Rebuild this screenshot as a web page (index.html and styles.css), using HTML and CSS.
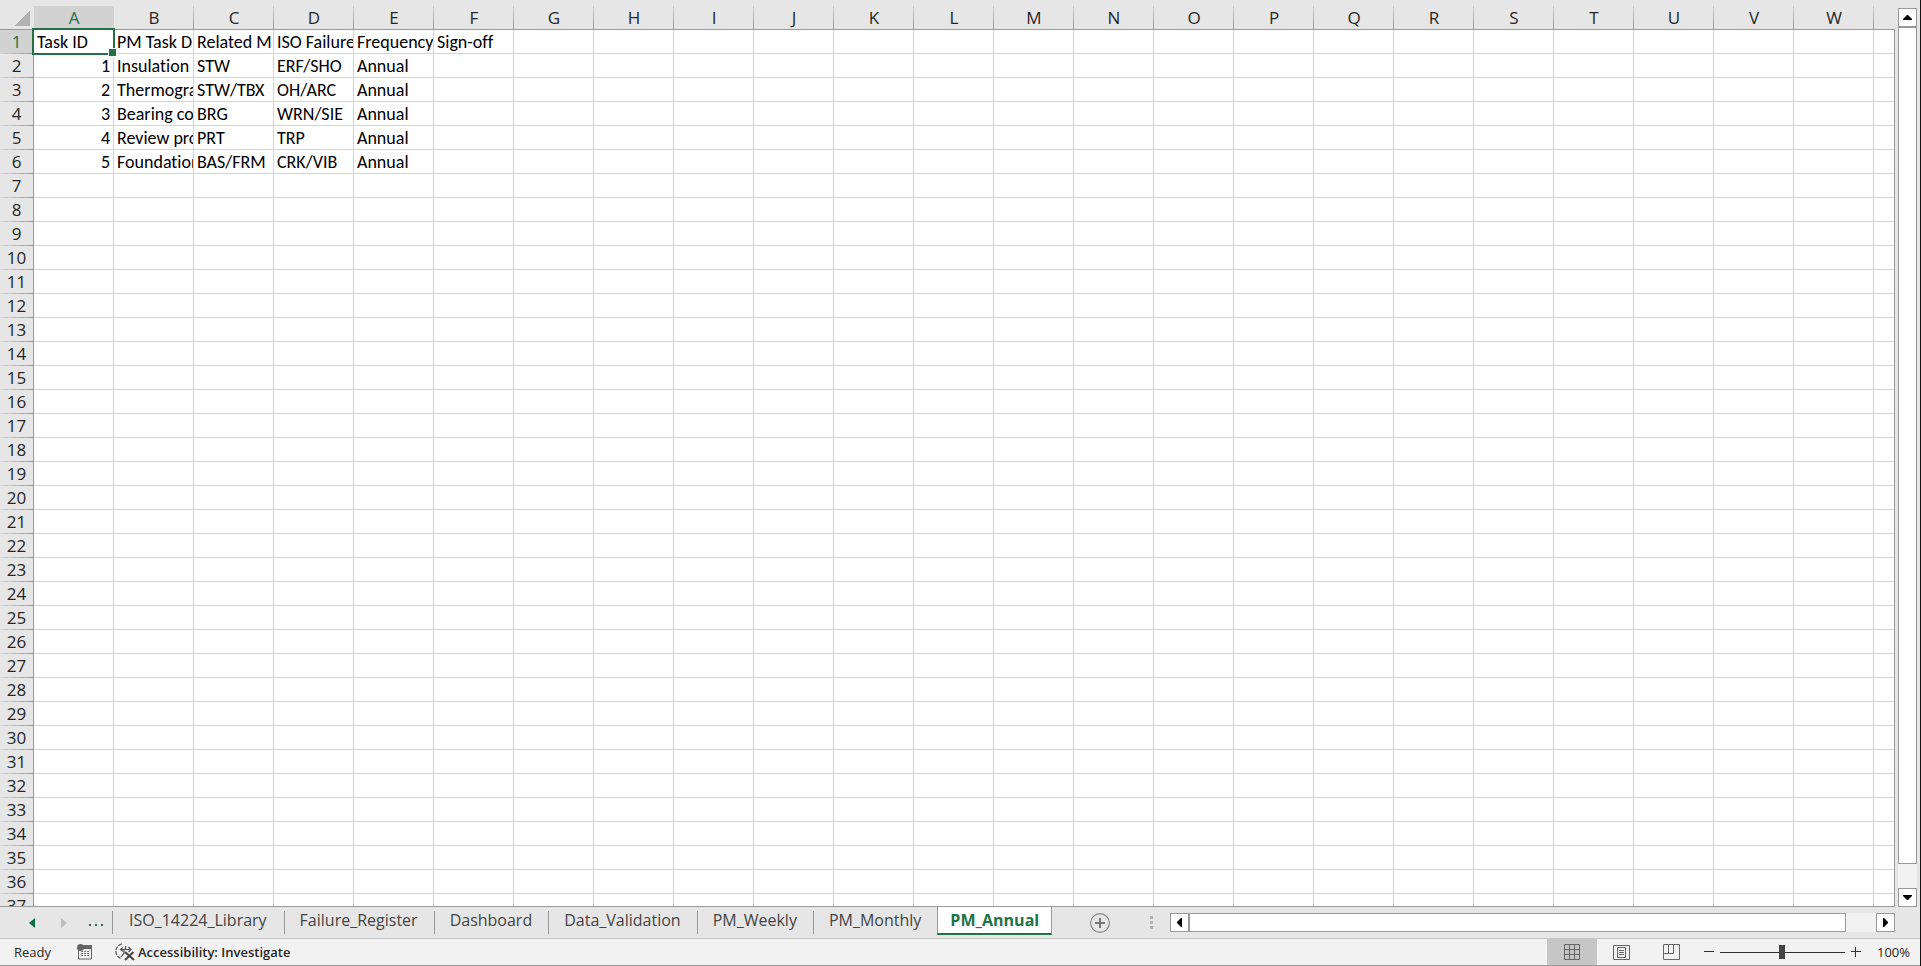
FILE: index.html
```html
<!DOCTYPE html>
<html lang="en">

<head>
    <meta charset="UTF-8">
    <meta name="viewport" content="width=device-width, initial-scale=1.0">
    <title>PM_Annual</title>
    <link rel="stylesheet" href="styles.css">
</head>

<body>
    <main class="workspace">
        <div class="sheet">
            <table class="grid">
                <thead>
                    <tr></tr>
                </thead>
                <tbody></tbody>
            </table>
        </div>
        <div class="vscroll">
            <button class="arrow" aria-label="Scroll up">
                <svg width="9" height="5" viewBox="0 0 9 5"><path d="M4 0h1l4 4v1H0V4z" /></svg>
            </button>
            <div class="thumb"></div>
            <div class="track"></div>
            <button class="arrow" aria-label="Scroll down">
                <svg width="9" height="5" viewBox="0 0 9 5"><path d="M0 0h9v1L5 5H4L0 1z" /></svg>
            </button>
        </div>
    </main>

    <div class="tabbar">
        <div class="tabnav">
            <button aria-label="Previous sheet"><svg width="6" height="10" viewBox="0 0 6 10"><path d="M6 0v10L0 5z" fill="#0e7040" /></svg></button>
            <button aria-label="Next sheet"><svg width="6" height="10" viewBox="0 0 6 10"><path d="M0 0v10l6-5z" fill="#bdbdbd" /></svg></button>
            <button class="more" aria-label="More sheets"><svg width="14" height="2" viewBox="0 0 14 2"><path d="M0 0h2v2H0zM6 0h2v2H6zM12 0h2v2h-2z" fill="#217346" /></svg></button>
        </div>
        <nav class="tabs">
            <a href="#">ISO_14224_Library</a>
            <a href="#">Failure_Register</a>
            <a href="#">Dashboard</a>
            <a href="#">Data_Validation</a>
            <a href="#">PM_Weekly</a>
            <a href="#">PM_Monthly</a>
            <a href="#" class="active">PM_Annual</a>
        </nav>
        <button class="add" aria-label="New sheet">
            <svg width="20" height="20" viewBox="0 0 20 20"><circle cx="10" cy="10" r="9.4" fill="none" stroke="#868686" stroke-width="1.2" /><path d="M5 9h4V5h2v4h4v2h-4v4H9v-4H5z" fill="#777" /></svg>
        </button>
        <div class="right">
            <svg class="grip" width="3" height="13" viewBox="0 0 3 13"><path d="M0 0h3v3H0zM0 5h3v3H0zM0 10h3v3H0z" fill="#b1b1b1" /></svg>
            <div class="hscroll">
                <button class="arrow" aria-label="Scroll left">
                    <svg width="5" height="9" viewBox="0 0 5 9"><path d="M5 0v9H4L0 5V4l4-4z" /></svg>
                </button>
                <div class="thumb"></div>
                <div class="track"></div>
                <button class="arrow" aria-label="Scroll right">
                    <svg width="5" height="9" viewBox="0 0 5 9"><path d="M0 0v9h1l4-4V4L1 0z" /></svg>
                </button>
            </div>
        </div>
    </div>

    <footer class="status">
        <span class="ready">Ready</span>
        <button class="macro" aria-label="Record macro">
            <svg width="16" height="16" viewBox="0 0 16 16">
                <path d="M1.500 5v10h13V2H6" fill="none" stroke="#666" />
                <path d="M6 1h9v4H6z" fill="#666" />
                <circle cx="3.500" cy="3.500" r="3.500" fill="#666" />
                <path d="M4 7.500h9M4 9.500h9M4 11.500h9" stroke="#777" stroke-dasharray="2 1" />
            </svg>
        </button>
        <button class="access">
            <svg width="20" height="18" viewBox="0 0 20 18">
                <path d="M7 1A7.500 7.500 0 0 0 6 15.500" fill="none" stroke="#666" stroke-width="1.400" stroke-dasharray="4 1" />
                <path d="M5 6.500h11M8 4.500l-2.500 2L8 8.500M13.500 4l2.500 2.500L13.500 9M10.500 3v3.500M9 7v3l-3 4" fill="none" stroke="#555" stroke-width="1.200" />
                <path d="M10 9l9 8M18.500 9L10 17" stroke="#444" stroke-width="2" />
            </svg>
            Accessibility: Investigate
        </button>
        <div class="views">
            <button class="on" aria-label="Normal view">
                <svg width="16" height="16" viewBox="0 0 16 16"><path d="M.5.5h15v15H.5zM.5 5.500h15M.5 10.500h15M5.500.5v15M10.500.5v15" /></svg>
            </button>
            <button aria-label="Page layout view">
                <svg width="17" height="15" viewBox="0 0 17 15"><path d="M.5.5h16v14H.5zM4.500 2.500h8v10h-8zM6 5.500h5M6 7.500h5M6 9.500h5" /></svg>
            </button>
            <button aria-label="Page break view">
                <svg width="17" height="16" viewBox="0 0 17 16"><path d="M.5.5h16v15H.5zM.5 9.500h10V.5M5.500.5v9" /></svg>
            </button>
        </div>
        <div class="zoom">
            <button aria-label="Zoom out"><svg width="10" height="10" viewBox="0 0 10 10"><path d="M0 4.500h10" stroke="#333" /></svg></button>
            <input type="range" min="0" max="100" value="50" aria-label="Zoom">
            <button aria-label="Zoom in"><svg width="10" height="10" viewBox="0 0 10 10"><path d="M0 4.500h10M4.500 0v10" stroke="#333" /></svg></button>
            <span>100%</span>
        </div>
    </footer>

    <script>
        var data = [
            ["Task ID", "PM Task D", "Related M", "ISO Failure", "Frequency", "Sign-off"],
            [1, "Insulation", "STW", "ERF/SHO", "Annual"],
            [2, "Thermogra", "STW/TBX", "OH/ARC", "Annual"],
            [3, "Bearing co", "BRG", "WRN/SIE", "Annual"],
            [4, "Review pro", "PRT", "TRP", "Annual"],
            [5, "Foundation", "BAS/FRM", "CRK/VIB", "Annual"]
        ]
        var cols = 26
        var rows = 40
        var head = document.querySelector(".grid thead tr")
        var body = document.querySelector(".grid tbody")

        function add(row, tag, text) {
            var el = document.createElement(tag)
            el.textContent = text
            row.appendChild(el)
            return el
        }

        add(head, "th", "").className = "corner"
        for (var c = 0; c < cols; c++) {
            add(head, "th", String.fromCharCode(65 + c))
        }
        for (var r = 0; r < rows; r++) {
            var tr = document.createElement("tr")
            add(tr, "th", r + 1)
            for (var c = 0; c < cols; c++) {
                var value = data[r] && data[r][c] !== undefined ? data[r][c] : ""
                var td = add(tr, "td", value)
                if (typeof value == "number") td.className = "num"
            }
            body.appendChild(tr)
        }

        // A1 is the active cell
        head.children[1].classList.add("current")
        body.rows[0].cells[0].classList.add("current")
        body.rows[0].cells[1].classList.add("selected")
    </script>
</body>

</html>
```
FILE: styles.css
```css
* {
    margin: 0;
    padding: 0;
    box-sizing: border-box;
}

body {
    height: 100vh;
    display: flex;
    flex-direction: column;
    overflow: hidden;
    background: #e6e6e6;
    border-right: 1px solid #111;
    font-family: "Segoe UI", "Open Sans", sans-serif;
    color: #262626;
}

button {
    border: none;
    background: none;
    font: inherit;
    color: inherit;
    display: flex;
    align-items: center;
    justify-content: center;
}

a {
    color: inherit;
    text-decoration: none;
}

.workspace {
    flex: 1;
    min-height: 0;
    display: flex;
}

/* cells */
.sheet {
    flex: 1;
    min-width: 0;
    overflow: hidden;
    position: relative;
    border-bottom: 1px solid #999;
}

/* right edge of the cell area, below the column letters */
.sheet::after {
    content: "";
    position: absolute;
    top: 29px;
    right: 0;
    bottom: 0;
    width: 1px;
    background: #999;
}

.grid {
    table-layout: fixed;
    width: 2114px;
    border-collapse: separate;
    border-spacing: 0;
}

.grid th {
    width: 80px;
    height: 24px;
    background: #e6e6e6;
    font-size: 17px;
    line-height: 23px;
    font-weight: 400;
}

.grid thead th {
    height: 30px;
    padding-top: 6px;
    border-bottom: 1px solid #999;
    background: linear-gradient(#d0d0d0, #999) right / 1px 100% no-repeat content-box, #e6e6e6;
}

.grid thead th.current {
    background: linear-gradient(#d2d2d2, #d2d2d2) content-box, #e6e6e6;
    color: #217346;
}

.grid thead th.corner {
    width: 34px;
    background: linear-gradient(135deg, transparent 50%, #b1b1b1 50%) 15px 10px / 15px 16px no-repeat, #e6e6e6;
}

.grid tbody th {
    padding-bottom: 2px;
    border-right: 1px solid #999;
    background: linear-gradient(90deg, #d6d6d6, #999) bottom / 100% 1px no-repeat, #e6e6e6;
    line-height: 21px;
}

.grid tbody th.current {
    background-color: #d2d2d2;
    color: #217346;
}

.grid td {
    height: 24px;
    padding: 2px 0 0 3px;
    background: #fff;
    border-right: 1px solid #d4d4d4;
    border-bottom: 1px solid #d4d4d4;
    font-family: Calibri, Carlito, Lato, sans-serif;
    font-size: 18px;
    line-height: 21px;
    font-variant-ligatures: none;
    color: #000;
    white-space: nowrap;
    overflow: hidden;
}

.grid td.num {
    padding-right: 3px;
    text-align: right;
}

.grid td.selected {
    position: relative;
    overflow: visible;
}

.selected::before {
    content: "";
    position: absolute;
    inset: -2px;
    border: 2px solid #217346;
}

.selected::after {
    content: "";
    position: absolute;
    right: -4px;
    bottom: -4px;
    width: 7px;
    height: 7px;
    background: #217346;
    border: 1px solid #fff;
}

/* scroll bars */
.arrow {
    flex: none;
    width: 19px;
    height: 19px;
    border: 1px solid #999;
    background: #fff;
}

.thumb {
    background: #fff;
    border: 1px solid #999;
}

.track {
    background: #f2f2f2;
}

.vscroll {
    width: 25px;
    padding: 8px 3px 0 3px;
    display: flex;
    flex-direction: column;
}

.vscroll .thumb {
    flex: 1;
}

.vscroll .track {
    height: 24px;
}

.hscroll {
    flex: 1;
    display: flex;
}

.hscroll .thumb {
    flex: 1;
}

.hscroll .track {
    width: 30px;
}

/* sheet tabs */
.tabbar {
    height: 32px;
    display: flex;
    align-items: flex-start;
    border-bottom: 1px solid #c6c6c6;
}

.tabnav {
    width: 112px;
    height: 31px;
    padding-left: 16px;
    display: flex;
}

.tabnav button {
    width: 32px;
}

.tabnav .more svg {
    margin-top: 4px;
}

.tabs {
    display: flex;
    font-size: 16px;
    line-height: 26px;
    color: #444;
}

.tabs a {
    height: 28px;
    padding: 0 16px;
    background: linear-gradient(#999, #999) 0 4px / 1px 23px no-repeat;
}

.tabs a:first-child {
    padding: 0 17px;
}

.tabs .active {
    height: 29px;
    padding: 0 12px;
    margin-top: -1px;
    background: #fff;
    border: 1px solid #999;
    border-top: none;
    border-bottom: 2px solid #217346;
    line-height: 28px;
    font-weight: 700;
    color: #217346;
}

.add {
    margin: 6px 0 0 38px;
}

.right {
    flex: 1;
    margin: 6px 25px 0 40px;
    display: flex;
    align-items: center;
    gap: 17px;
}

/* status bar */
.status {
    height: 27px;
    padding-left: 14px;
    display: flex;
    align-items: center;
    background: #f2f2f2;
    border-bottom: 1px solid #999;
    font-size: 13px;
}

.macro {
    margin-left: 26px;
}

.access {
    margin-left: 22px;
    gap: 3px;
    font-weight: 600;
}

.views {
    margin-left: auto;
    height: 26px;
    display: flex;
}

.views button {
    width: 50px;
}

.views .on {
    background: #c6c6c6;
}

.views path {
    fill: none;
    stroke: #666;
}

.zoom {
    display: flex;
    align-items: center;
    margin-left: 7px;
    padding-right: 10px;
}

.zoom input {
    appearance: none;
    width: 125px;
    height: 14px;
    margin: 0 6px;
    background: linear-gradient(#333, #333) center / 100% 1px no-repeat;
}

.zoom input::-webkit-slider-thumb {
    appearance: none;
    width: 6px;
    height: 14px;
    background: #444;
}

.zoom span {
    margin-left: 16px;
}
```
